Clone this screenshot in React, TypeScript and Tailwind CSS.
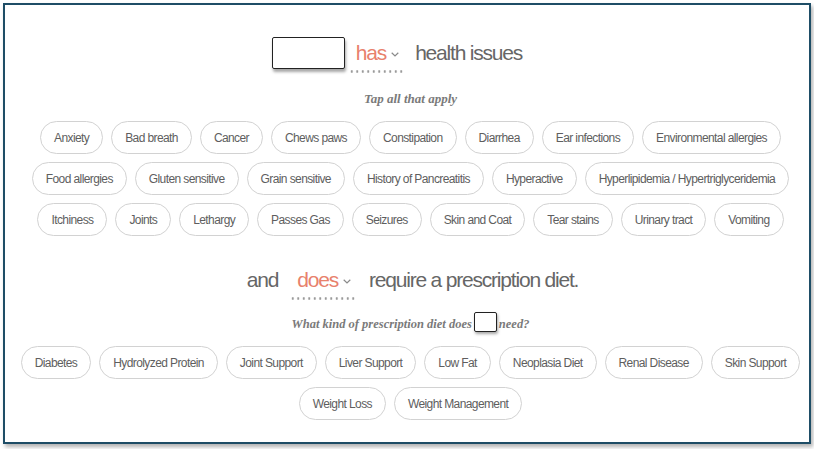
import React from "react";

const sans = "font-['Liberation_Sans',Arial,sans-serif]";

const issueRows: string[][] = [
  ["Anxiety", "Bad breath", "Cancer", "Chews paws", "Constipation", "Diarrhea", "Ear infections", "Environmental allergies"],
  ["Food allergies", "Gluten sensitive", "Grain sensitive", "History of Pancreatitis", "Hyperactive", "Hyperlipidemia / Hypertriglyceridemia"],
  ["Itchiness", "Joints", "Lethargy", "Passes Gas", "Seizures", "Skin and Coat", "Tear stains", "Urinary tract", "Vomiting"],
];

const dietRows: string[][] = [
  ["Diabetes", "Hydrolyzed Protein", "Joint Support", "Liver Support", "Low Fat", "Neoplasia Diet", "Renal Disease", "Skin Support"],
  ["Weight Loss", "Weight Management"],
];

function Chevron() {
  return (
    <svg width="8" height="5" viewBox="0 0 8 5" className="ml-[5px] mt-[2px]">
      <polyline points="0.7,0.8 4,4 7.3,0.8" fill="none" stroke="#8a8a8a" strokeWidth="1.2" />
    </svg>
  );
}

function Select({ value }: { value: string }) {
  return (
    <span className="relative flex items-center px-[7px] pr-[6px]">
      <span className="text-[#e8816c]">{value}</span>
      <Chevron />
      {/* dotted underline */}
      <span className="absolute left-0 right-0 -bottom-[6px] h-[3px] bg-[radial-gradient(circle,#9a9a9a_1px,transparent_1.4px)] bg-[length:5.5px_3px] bg-repeat-x" />
    </span>
  );
}

function Chip({ label }: { label: string }) {
  return (
    <button
      type="button"
      className={`flex h-[33px] shrink-0 items-center whitespace-nowrap rounded-full border border-[#d2d2d2] bg-white px-[13px] text-[12px] tracking-[-0.05em] text-[#5e5e5e] ${sans}`}
    >
      {label}
    </button>
  );
}

function ChipRows({ rows }: { rows: string[][] }) {
  return (
    <div className="flex flex-col items-center gap-[8px]">
      {rows.map((row, i) => (
        <div key={i} className="flex gap-[8px]">
          {row.map((l) => (
            <Chip key={l} label={l} />
          ))}
        </div>
      ))}
    </div>
  );
}

export default function App() {
  return (
    <div className="h-[449px] w-[814px] overflow-hidden bg-white pl-[3px] pt-[3px]">
      <div className="h-[441px] w-[808px] border-2 border-[#1e4d66] bg-white shadow-[2px_3px_4px_rgba(0,0,0,0.3)]">
        <div className="flex flex-col items-center pl-[7px]">
          {/* heading 1 */}
          <div className={`mt-[32px] flex h-[32px] items-center pr-[27px] text-[21px] leading-[28px] tracking-[-0.057em] text-[#666] ${sans}`}>
            <span className="mr-[4px] h-[32px] w-[73px] rounded-[2px] border-[1.5px] border-[#222] bg-white shadow-[1px_3px_3px_rgba(0,0,0,0.35)]" />
            <Select value="has" />
            <span className="ml-[10px]">health issues</span>
          </div>

          <p className="mt-[22px] font-['Liberation_Serif',serif] text-[13px] font-bold italic leading-[16px] text-[#7a7a7a]">
            Tap all that apply
          </p>

          <div className="mt-[14px]">
            <ChipRows rows={issueRows} />
          </div>

          {/* heading 2 */}
          <div className={`mt-[28px] flex h-[32px] items-center pl-[4px] text-[21px] leading-[28px] tracking-[-0.057em] text-[#666] ${sans}`}>
            <span className="mr-[12px]">and</span>
            <Select value="does" />
            <span className="ml-[12px]">require a prescription diet.</span>
          </div>

          <div className="mt-[20px] flex h-[16px] items-center font-['Liberation_Serif',serif] text-[12.5px] font-bold italic text-[#7a7a7a]">
            <span>What kind of prescription diet does</span>
            <span className="mx-[2px] mt-[-4px] h-[20px] w-[23px] rounded-[2px] border-[1.5px] border-[#222] bg-white shadow-[1px_2px_3px_rgba(0,0,0,0.35)]" />
            <span>need?</span>
          </div>

          <div className="mt-[14px]">
            <ChipRows rows={dietRows} />
          </div>
        </div>
      </div>
    </div>
  );
}
